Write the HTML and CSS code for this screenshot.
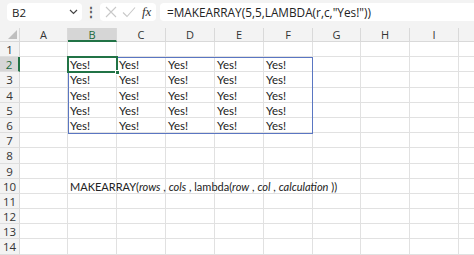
FILE: index.html
```html
<!DOCTYPE html>
<html>
<head>
<meta charset="utf-8">
<link rel="stylesheet" href="styles.css">
</head>
<body>
<div class="app">
  <div class="fbar">
    <div class="namebox"><span class="ref">B2</span>
      <svg class="chev" width="9" height="6" viewBox="0 0 9 6"><path d="M1 1 L4.5 4.5 L8 1" fill="none" stroke="#444" stroke-width="1.2"/></svg>
    </div>
    <div class="dots">⋮</div>
    <div class="fxbox">
      <svg width="12" height="12" viewBox="0 0 12 12"><path d="M1 1 L11 11 M11 1 L1 11" stroke="#c8c8c8" stroke-width="1.1" fill="none"/></svg>
      <svg width="14" height="12" viewBox="0 0 14 12"><path d="M1 6.5 L5 10.5 L13 1.5" stroke="#c8c8c8" stroke-width="1.1" fill="none"/></svg>
      <span class="fx">fx</span>
    </div>
    <div class="formula">=MAKEARRAY(5,5,LAMBDA(r,c,"Yes!"))</div>
  </div>
  <div class="sheet">
    <div class="grid">
      <div class="corner"><span class="tri"></span></div>
      <div class="ch">A</div><div class="ch sel">B</div><div class="ch">C</div><div class="ch">D</div><div class="ch">E</div><div class="ch">F</div><div class="ch">G</div><div class="ch">H</div><div class="ch">I</div><div class="ch last"></div>

      <div class="rh">1</div><div class="c"></div><div class="c"></div><div class="c"></div><div class="c"></div><div class="c"></div><div class="c"></div><div class="c"></div><div class="c"></div><div class="c"></div><div class="c"></div>
      <div class="rh sel">2</div><div class="c"></div><div class="c">Yes!</div><div class="c">Yes!</div><div class="c">Yes!</div><div class="c">Yes!</div><div class="c">Yes!</div><div class="c"></div><div class="c"></div><div class="c"></div><div class="c"></div>
      <div class="rh">3</div><div class="c"></div><div class="c">Yes!</div><div class="c">Yes!</div><div class="c">Yes!</div><div class="c">Yes!</div><div class="c">Yes!</div><div class="c"></div><div class="c"></div><div class="c"></div><div class="c"></div>
      <div class="rh">4</div><div class="c"></div><div class="c">Yes!</div><div class="c">Yes!</div><div class="c">Yes!</div><div class="c">Yes!</div><div class="c">Yes!</div><div class="c"></div><div class="c"></div><div class="c"></div><div class="c"></div>
      <div class="rh">5</div><div class="c"></div><div class="c">Yes!</div><div class="c">Yes!</div><div class="c">Yes!</div><div class="c">Yes!</div><div class="c">Yes!</div><div class="c"></div><div class="c"></div><div class="c"></div><div class="c"></div>
      <div class="rh">6</div><div class="c"></div><div class="c">Yes!</div><div class="c">Yes!</div><div class="c">Yes!</div><div class="c">Yes!</div><div class="c">Yes!</div><div class="c"></div><div class="c"></div><div class="c"></div><div class="c"></div>
      <div class="rh">7</div><div class="c"></div><div class="c"></div><div class="c"></div><div class="c"></div><div class="c"></div><div class="c"></div><div class="c"></div><div class="c"></div><div class="c"></div><div class="c"></div>
      <div class="rh">8</div><div class="c"></div><div class="c"></div><div class="c"></div><div class="c"></div><div class="c"></div><div class="c"></div><div class="c"></div><div class="c"></div><div class="c"></div><div class="c"></div>
      <div class="rh">9</div><div class="c"></div><div class="c"></div><div class="c"></div><div class="c"></div><div class="c"></div><div class="c"></div><div class="c"></div><div class="c"></div><div class="c"></div><div class="c"></div>
      <div class="rh">10</div><div class="c"></div><div class="c over">MAKEARRAY(<i>rows</i> , <i>cols</i> , lambda(<i>row</i> , <i>col</i> , <i>calculation</i> ))</div><div class="c"></div><div class="c"></div><div class="c"></div><div class="c"></div><div class="c"></div><div class="c"></div><div class="c"></div><div class="c"></div>
      <div class="rh">11</div><div class="c"></div><div class="c"></div><div class="c"></div><div class="c"></div><div class="c"></div><div class="c"></div><div class="c"></div><div class="c"></div><div class="c"></div><div class="c"></div>
      <div class="rh">12</div><div class="c"></div><div class="c"></div><div class="c"></div><div class="c"></div><div class="c"></div><div class="c"></div><div class="c"></div><div class="c"></div><div class="c"></div><div class="c"></div>
      <div class="rh">13</div><div class="c"></div><div class="c"></div><div class="c"></div><div class="c"></div><div class="c"></div><div class="c"></div><div class="c"></div><div class="c"></div><div class="c"></div><div class="c"></div>
      <div class="rh">14</div><div class="c"></div><div class="c"></div><div class="c"></div><div class="c"></div><div class="c"></div><div class="c"></div><div class="c"></div><div class="c"></div><div class="c"></div><div class="c"></div>
    </div>
    <div class="spill"></div>
    <div class="active"><span class="handle"></span></div>
  </div>
</div>
</body>
</html>
```

FILE: styles.css
```css
* { box-sizing: border-box; }
html, body { margin: 0; padding: 0; background: #fff; }
body { width: 474px; height: 255px; overflow: hidden; font-family: "Open Sans", "Noto Sans", sans-serif; }
.app { width: 474px; height: 255px; overflow: hidden; }
.fbar {
  height: 28px;
  background: #f3f3f3;
  display: flex;
  align-items: flex-start;
  padding: 3px 0 0 7px;
}
.namebox {
  width: 75px; height: 18px;
  background: #fff;
  border-radius: 4px;
  display: flex; align-items: center; justify-content: space-between;
  padding: 0 4px 0 5px;
  font-size: 11.5px; color: #222;
}
.dots { width: 18px; text-align: center; font-size: 12px; line-height: 18px; color: #555; font-weight: bold; }
.fxbox {
  width: 56px; height: 18px;
  background: #fff; border-radius: 4px;
  display: flex; align-items: center; gap: 5px;
  padding-left: 5px;
}
.fx { font-family: "Liberation Serif", serif; font-style: italic; font-size: 13px; color: #333; margin-left: 1px; }
.formula {
  flex: 1; height: 18px; margin-left: 4px;
  background: #fff; border-radius: 4px 0 0 4px;
  font-size: 11.8px; line-height: 18px; color: #222;
  padding-left: 7px; white-space: nowrap;
}
.sheet { position: relative; }
.grid {
  display: grid;
  grid-template-columns: 20px 48px 49px 49px 49px 49px 49px 48px 49px 49px 20px;
  grid-template-rows: 14px repeat(14, 15.2px);
}
.corner { background: #f3f3f3; border-right: 1px solid #d9d9d9; border-bottom: 1px solid #d9d9d9; position: relative; }
.tri { position: absolute; right: 2px; bottom: 2px; width: 0; height: 0; border-left: 9px solid transparent; border-bottom: 9px solid #bfbfbf; }
.ch {
  background: #f3f3f3; border-right: 1px solid #d9d9d9; border-bottom: 1px solid #d9d9d9;
  font-size: 11px; color: #333; text-align: center; line-height: 13px;
}
.ch.sel { background: #d6d6d6; color: #1d6b3e; border-bottom: 2px solid #217346; }
.rh {
  background: #f3f3f3; border-right: 1px solid #d9d9d9; border-bottom: 1px solid #dedede;
  font-size: 11.5px; color: #333; text-align: center; line-height: 15px;
}
.rh.sel { background: #d6d6d6; color: #1d6b3e; border-right: 2px solid #217346; }
.c {
  border-right: 1px solid #e1e1e1; border-bottom: 1px solid #e1e1e1;
  font-family: "Lato", "Open Sans", sans-serif; font-size: 11.5px; color: #222;
  line-height: 15px; padding-left: 2px; white-space: nowrap;
}
.c.over { overflow: visible; position: relative; z-index: 1; font-size: 11px; }
.c i { font-style: italic; }
.spill {
  position: absolute; left: 68px; top: 29px; width: 245px; height: 77px;
  border: 1px solid #5a76c2;
}
.active {
  position: absolute; left: 67px; top: 28px; width: 51px; height: 17px;
  border: 2px solid #217346;
}
.handle {
  position: absolute; right: -4px; bottom: -4px; width: 5px; height: 5px;
  background: #217346; border: 1px solid #fff;
}
```
